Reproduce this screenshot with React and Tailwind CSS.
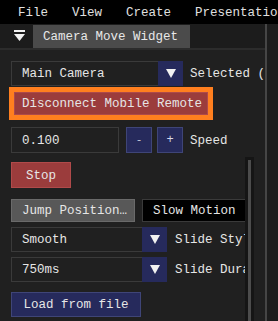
import React from "react";

function Arrow() {
  return (
    <svg width="10" height="9" viewBox="0 0 10 9">
      <polygon points="0,0 10,0 5,9" fill="#f2f2f2" />
    </svg>
  );
}

function Combo({ value, width, label, gap }) {
  return (
    <div className="flex h-[25px] items-center">
      <div className={`flex h-full shrink-0 ${width}`}>
        <div className="flex-1 border border-r-0 border-[#3a3a3a] pl-[10px] pt-[2px] leading-[21px]">{value}</div>
        <div className="flex w-[25px] items-center justify-center bg-[#262a5c]">
          <Arrow />
        </div>
      </div>
      <span className={`${gap} pt-[2px] whitespace-nowrap`}>{label}</span>
    </div>
  );
}

export default function App() {
  return (
    <div className="relative flex h-[321px] w-[278px] flex-col overflow-hidden bg-[#202020] font-['Liberation_Mono',monospace] text-[12.5px] text-[#e6e6e6]">
      <div className="flex h-[24px] shrink-0 items-center gap-[24px] bg-black pl-[18px] pt-[2px] whitespace-nowrap text-[#e0e0e0]">
        <span>File</span>
        <span>View</span>
        <span>Create</span>
        <span>Presentation</span>
      </div>

      <div className="flex min-h-0 flex-1">
        <div className="flex w-[265px] shrink-0 flex-col">
          <div className="flex h-[24px] shrink-0 items-end bg-[#1c1c1c]">
            <div className="flex h-full w-[33px] items-center justify-center pl-[5px]">
              <svg width="11" height="12" viewBox="0 0 11 12">
                <rect x="0" y="0" width="11" height="2" fill="#f2f2f2" />
                <polygon points="0,4 11,4 5.5,11" fill="#f2f2f2" />
              </svg>
            </div>
            <div className="h-[23px] w-[157px] bg-[#4b4b4b] pl-[10px] pt-[2px] leading-[21px] text-[#e8e8e8] whitespace-nowrap">
              Camera Move Widget
            </div>
          </div>
          <div className="h-[2px] shrink-0 bg-[#2c2c2c]" />

          <div className="flex min-h-0 flex-1 flex-col pl-[11px] pt-[11px]">
            <Combo value="Main Camera" width="w-[172px]" label="Selected (" gap="ml-[7px]" />

            <div className="ml-[-2px] mt-[1px] w-fit border-[5px] border-[#ff7f1f] bg-[#ff7f1f]">
              <div className="h-[23px] w-[194px] border border-[#ad4a4a] bg-[#9b3c3c] pl-[7px] pt-[2px] leading-[19px] whitespace-nowrap">
                Disconnect Mobile Remote
              </div>
            </div>

            <div className="mt-[7px] flex h-[26px] shrink-0 items-center">
              <div className="h-full w-[108px] border border-[#3a3a3a] pl-[10px] pt-[2px] leading-[22px]">0.100</div>
              <div className="ml-[7px] flex h-full w-[26px] items-center justify-center border border-[#3f4577] bg-[#262a5c] text-[11px] text-[#c8c8d8]">-</div>
              <div className="ml-[5px] flex h-full w-[26px] items-center justify-center border border-[#3f4577] bg-[#262a5c] text-[12px] text-[#d8d8e8]">+</div>
              <span className="ml-[7px] pt-[2px]">Speed</span>
            </div>

            <div className="mt-[4px] flex min-h-0 w-[243px] flex-1">
              <div className="flex min-w-0 flex-1 flex-col overflow-hidden pt-[5px]">
                <div className="flex h-[26px] w-[60px] shrink-0 items-center justify-center border border-[#b04a4a] bg-[#9b3c3c] pt-[2px]">
                  Stop
                </div>

                <div className="mt-[11px] flex h-[23px] shrink-0 items-center whitespace-nowrap">
                  <div className="h-full w-[124px] shrink-0 overflow-hidden border border-[#6a6a6a] bg-[#585858] pl-[10px] pt-[2px] leading-[19px]">
                    Jump Position…
                  </div>
                  <div className="ml-[7px] h-full w-[110px] shrink-0 border border-[#3a3a3a] bg-black pl-[10px] pt-[2px] leading-[19px]">
                    Slow Motion
                  </div>
                </div>

                <div className="mt-[5px]">
                  <Combo value="Smooth" width="w-[156px]" label="Slide Style" gap="ml-[8px]" />
                </div>
                <div className="mt-[5px]">
                  <Combo value="750ms" width="w-[156px]" label="Slide Duration" gap="ml-[8px]" />
                </div>

                <div className="mt-[10px] h-[25px] w-[130px] shrink-0 border border-[#3f4577] bg-[#262a5c] pt-[2px] text-center leading-[21px] whitespace-nowrap">
                  Load from file
                </div>
              </div>
              <div className="w-[9px] shrink-0 bg-[#151515] pl-[3px] pt-[3px]">
                <div className="h-full w-[3px] bg-[#4c4c4c]" />
              </div>
            </div>
          </div>
        </div>
        <div className="w-[2px] shrink-0 bg-[#464646]" />
        <div className="flex-1 bg-[#1d1d1d]" />
      </div>
    </div>
  );
}
